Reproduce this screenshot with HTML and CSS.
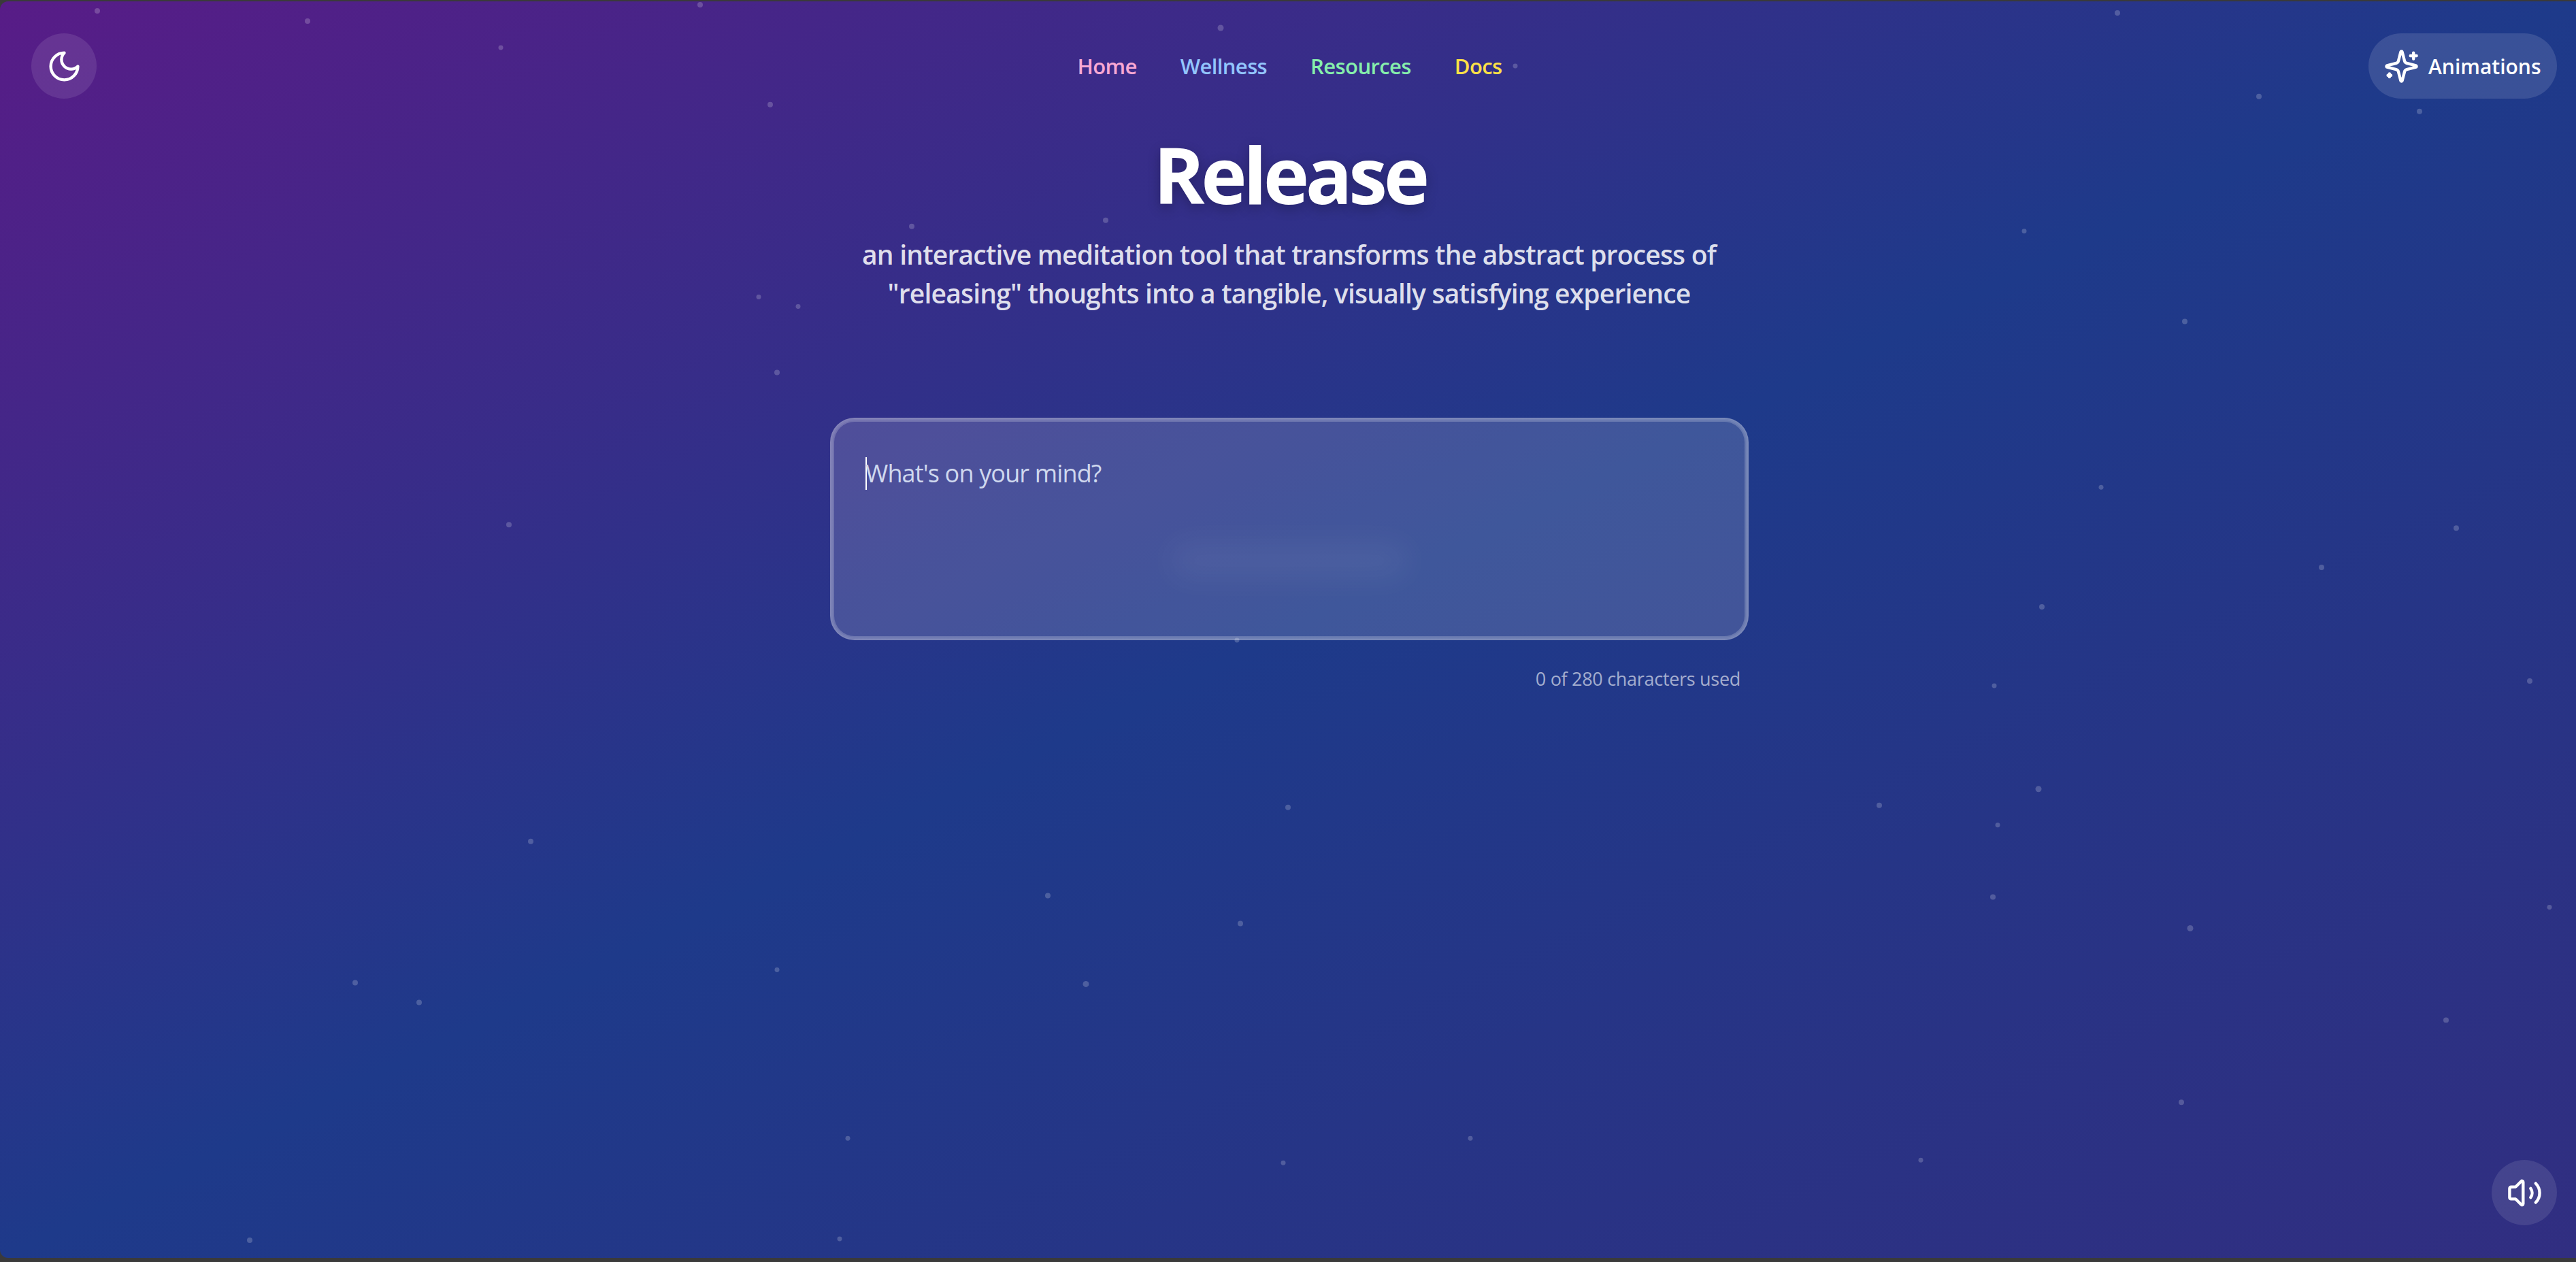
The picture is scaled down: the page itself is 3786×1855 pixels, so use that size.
FILE: index.html
```html
<!DOCTYPE html>
<html lang="en">
<head>
<meta charset="UTF-8" />
<meta name="viewport" content="width=device-width, initial-scale=1" />
<title>Release</title>
<link rel="stylesheet" href="styles.css">
</head>
<body>

<div class="app">
  <!-- floating particles -->
  <svg class="stars" viewBox="0 0 3786 1849" preserveAspectRatio="none">
    <circle cx="143" cy="14" r="4"/><circle cx="452" cy="29" r="4"/><circle cx="736" cy="68" r="3.5"/><circle cx="1029" cy="5" r="4"/>
    <circle cx="1132" cy="152" r="4"/><circle cx="1794" cy="39" r="4.5"/><circle cx="3112" cy="17" r="4"/><circle cx="3320" cy="140" r="4"/>
    <circle cx="3556" cy="162" r="4"/><circle cx="1625" cy="322" r="4"/><circle cx="1340" cy="331" r="4"/><circle cx="1115" cy="435" r="3.5"/>
    <circle cx="1173" cy="449" r="3.5"/><circle cx="1142" cy="546" r="4"/><circle cx="2975" cy="338" r="3.5"/><circle cx="3211" cy="471" r="4"/>
    <circle cx="3088" cy="715" r="3.5"/><circle cx="748" cy="770" r="4"/><circle cx="3610" cy="775" r="4"/><circle cx="3412" cy="833" r="4"/>
    <circle cx="3001" cy="891" r="4"/><circle cx="1818" cy="940" r="3.5"/><circle cx="2931" cy="1007" r="3.5"/><circle cx="3718" cy="1000" r="4"/>
    <circle cx="2227" cy="95" r="3.5"/><circle cx="2762" cy="1183" r="4"/><circle cx="2996" cy="1159" r="4.5"/><circle cx="2936" cy="1212" r="3.5"/>
    <circle cx="1893" cy="1186" r="4"/><circle cx="780" cy="1236" r="4"/><circle cx="1540" cy="1316" r="4"/><circle cx="1823" cy="1357" r="4"/>
    <circle cx="2929" cy="1318" r="4"/><circle cx="3219" cy="1364" r="4.5"/><circle cx="3747" cy="1333" r="3.5"/><circle cx="1142" cy="1425" r="3.5"/>
    <circle cx="1596" cy="1446" r="4.5"/><circle cx="522" cy="1444" r="4"/><circle cx="616" cy="1473" r="4"/><circle cx="3595" cy="1499" r="4"/>
    <circle cx="3206" cy="1620" r="4"/><circle cx="1246" cy="1673" r="3.5"/><circle cx="2161" cy="1673" r="3.5"/><circle cx="1886" cy="1709" r="3.5"/>
    <circle cx="2823" cy="1705" r="3.5"/><circle cx="367" cy="1823" r="4"/><circle cx="1234" cy="1821" r="3.5"/>
  </svg>

  <header class="topbar">
    <div class="topbar-left">
      <button class="round-btn" aria-label="Toggle theme">
        <svg class="icon" viewBox="0 0 24 24"><path d="M12 3a6 6 0 0 0 9 9 9 9 0 1 1-9-9Z"/></svg>
      </button>
    </div>
    <nav class="nav">
      <a class="nav-home" href="#">Home</a>
      <a class="nav-wellness" href="#">Wellness</a>
      <a class="nav-resources" href="#">Resources</a>
      <a class="nav-docs" href="#">Docs</a>
    </nav>
    <div class="topbar-right">
      <button class="pill-btn">
        <svg class="icon" viewBox="0 0 24 24">
          <path d="M9.937 15.5A2 2 0 0 0 8.5 14.063l-6.135-1.582a.5.5 0 0 1 0-.962L8.5 9.936A2 2 0 0 0 9.937 8.5l1.582-6.135a.5.5 0 0 1 .963 0L14.063 8.5A2 2 0 0 0 15.5 9.937l6.135 1.581a.5.5 0 0 1 0 .964L15.5 14.063a2 2 0 0 0-1.437 1.437l-1.582 6.135a.5.5 0 0 1-.963 0z"/>
          <path d="M20 3v4"/><path d="M22 5h-4"/><path d="M4 17v2"/><path d="M5 18H3"/>
        </svg>
        Animations
      </button>
    </div>
  </header>

  <main class="main">
    <h1 class="title">Release</h1>
    <p class="subtitle">an interactive meditation tool that transforms the abstract process of<br>"releasing" thoughts into a tangible, visually satisfying experience</p>

    <div class="card">
      <div class="prompt"><span class="caret"></span>What's on your mind?</div>
      <div class="ghost-btn"></div>
    </div>
    <div class="counter">0 of 280 characters used</div>
  </main>

  <button class="round-btn sound-btn" aria-label="Toggle sound">
    <svg class="icon" viewBox="0 0 24 24">
      <path d="M11 4.702a.705.705 0 0 0-1.203-.498L6.413 7.587A1.4 1.4 0 0 1 5.416 8H3a1 1 0 0 0-1 1v6a1 1 0 0 0 1 1h2.416a1.4 1.4 0 0 1 .997.413l3.383 3.384A.705.705 0 0 0 11 19.298z"/>
      <path d="M16 9a5 5 0 0 1 0 6"/><path d="M19.364 18.364a9 9 0 0 0 0-12.728"/>
    </svg>
  </button>
</div>

</body>
</html>
```

FILE: styles.css
```css
html, body {
  height: 100%;
}
body {
  margin: 0;
  padding: 2px 0 6px;
  box-sizing: border-box;
  background: #3a3a3a;
  font-family: "Open Sans", "Noto Sans", Arial, sans-serif;
  color: white;
  overflow: hidden;
}
.app {
  position: relative;
  height: 100%;
  overflow: hidden;
  border-radius: 12px 0 0 12px;
  background: linear-gradient(to bottom right, #581c87, #1e3a8a, #312e81);
}
.stars {
  position: absolute;
  top: 0;
  left: 0;
  width: 100%;
  height: 100%;
  fill: rgba(255,255,255,0.2);
}
.topbar {
  position: relative;
  display: grid;
  grid-template-columns: 1fr auto 1fr;
  align-items: center;
  padding: 47px 28px 0 46px;
}
.topbar-right {
  display: flex;
  justify-content: flex-end;
}
.icon {
  width: 53px;
  height: 53px;
  flex: none;
  fill: none;
  stroke: white;
  stroke-width: 2;
  stroke-linecap: round;
  stroke-linejoin: round;
}
.round-btn {
  display: flex;
  align-items: center;
  justify-content: center;
  width: 96px;
  height: 96px;
  padding: 0;
  border: none;
  border-radius: 50%;
  background: rgba(255,255,255,0.1);
}
.pill-btn {
  display: flex;
  align-items: center;
  gap: 13px;
  width: 277px;
  height: 96px;
  padding: 0 0 0 22px;
  border: none;
  border-radius: 48px;
  background: rgba(255,255,255,0.12);
  color: white;
  font: 600 30px "Open Sans", "Noto Sans", Arial, sans-serif;
  white-space: nowrap;
}
.sound-btn {
  position: absolute;
  right: 28px;
  bottom: 48px;
}
.nav {
  display: flex;
  gap: 64px;
  padding-right: 13px;
}
.nav a {
  font-size: 31px;
  font-weight: 600;
  letter-spacing: -0.6px;
  text-decoration: none;
}
.nav-home { color: #f9a8d4; }
.nav-wellness { color: #93c5fd; }
.nav-resources { color: #86efac; }
.nav-docs { color: #fde047; }
.main {
  position: relative;
  display: flex;
  flex-direction: column;
  align-items: center;
}
.title {
  margin: 36px 0 0;
  padding-left: 5px;
  font-size: 114px;
  font-weight: 700;
  line-height: 150px;
  letter-spacing: -5.3px;
  text-shadow: 0 6px 18px rgba(0,0,0,0.25);
}
.subtitle {
  margin: 14px 0 0;
  padding-left: 3px;
  font-size: 39px;
  font-weight: 600;
  line-height: 57px;
  letter-spacing: -0.8px;
  text-align: center;
  color: rgba(255,255,255,0.85);
}
.card {
  display: flex;
  flex-direction: column;
  box-sizing: border-box;
  width: 1350px;
  height: 327px;
  margin: 155px 0 0 4px;
  padding: 56px 50px 0;
  border: 2px solid rgba(255,255,255,0.3);
  border-radius: 36px;
  background: rgba(255,255,255,0.15);
  box-shadow: inset 0 0 0 2px rgba(255,255,255,0.08), inset 0 0 0 4px rgba(255,255,255,0.2);
}
.prompt {
  height: 48px;
  font-size: 36px;
  line-height: 48px;
  letter-spacing: -0.85px;
  color: #cfd8ee;
}
.caret {
  display: inline-block;
  width: 2px;
  height: 48px;
  margin-right: -2px;
  vertical-align: top;
  background: white;
}
.ghost-btn {
  align-self: center;
  width: 352px;
  height: 56px;
  margin-top: 76px;
  border-radius: 28px;
  background: rgba(255,255,255,0.05);
  filter: blur(20px);
}
.counter {
  box-sizing: border-box;
  width: 1350px;
  margin: 39px 0 0 4px;
  padding-right: 12px;
  font-size: 27px;
  line-height: 36px;
  letter-spacing: -0.3px;
  text-align: right;
  color: rgba(255,255,255,0.6);
}
```
